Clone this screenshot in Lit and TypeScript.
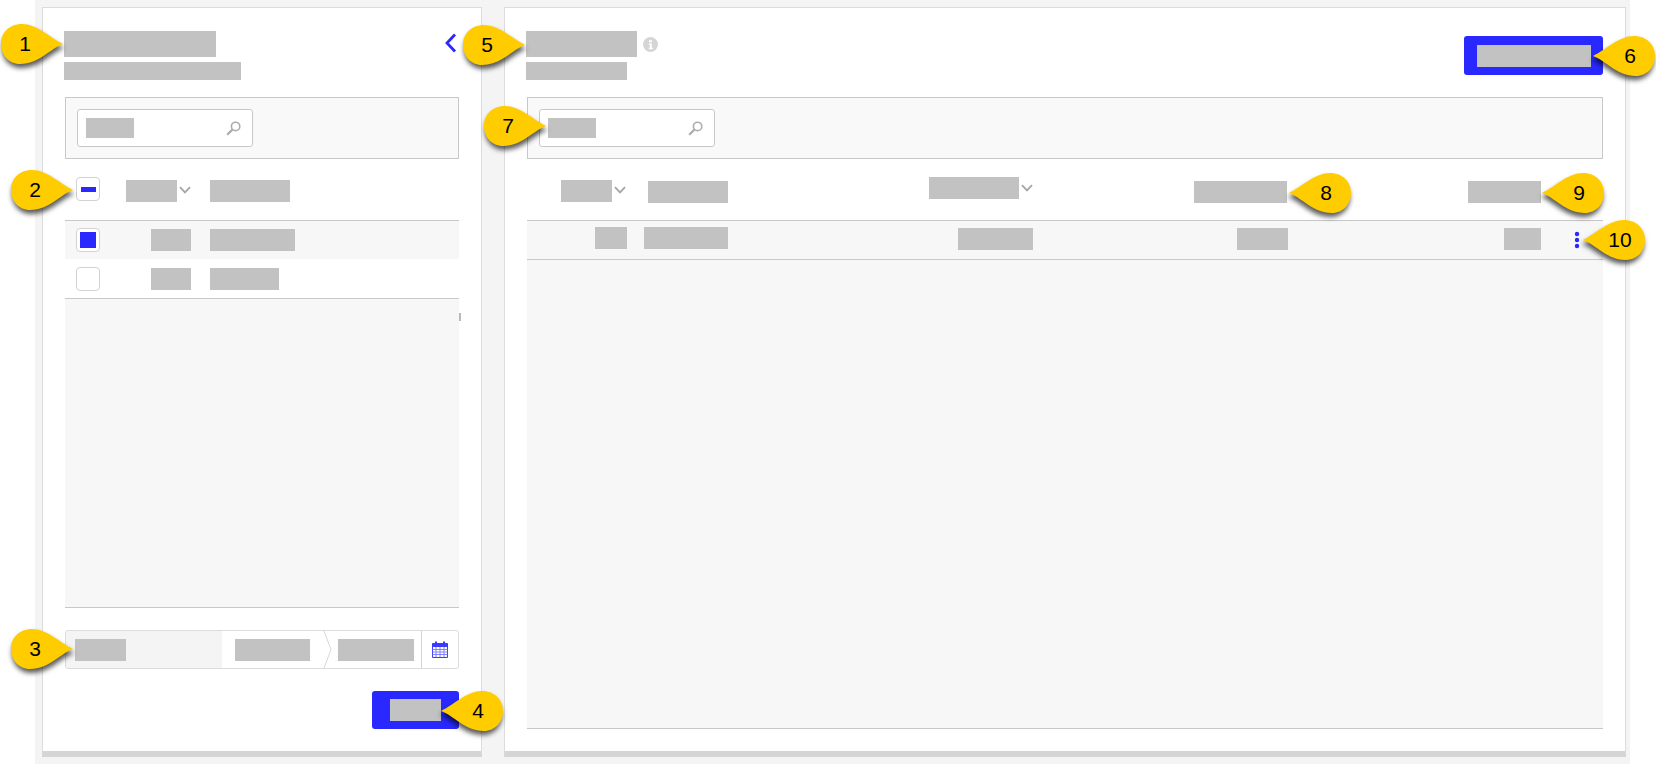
import { LitElement, html, css, svg } from "lit";
import { customElement } from "lit/decorators.js";

type Cell = { w: number; dy?: number; chev?: boolean; mr?: number };

const CALLOUTS: { n: string; x: number; y: number; left?: boolean }[] = [
  { n: "1", x: 1, y: 24 },
  { n: "2", x: 11, y: 170 },
  { n: "3", x: 11, y: 629 },
  { n: "4", x: 441, y: 691, left: true },
  { n: "5", x: 463, y: 25 },
  { n: "6", x: 1593, y: 36, left: true },
  { n: "7", x: 484, y: 106 },
  { n: "8", x: 1289, y: 173, left: true },
  { n: "9", x: 1542, y: 173, left: true },
  { n: "10", x: 1583, y: 220, left: true },
];

const RIGHT_HEAD: Cell[] = [
  { w: 51, chev: true, mr: 1 },
  { w: 80, dy: 1 },
  { w: 90, dy: -3, chev: true },
  { w: 93, dy: 1, mr: 1 },
  { w: 73, dy: 1 },
];
const RIGHT_ROW: Cell[] = [
  { w: 32, dy: -4 },
  { w: 84, dy: -4 },
  { w: 75, dy: -3 },
  { w: 51, dy: -3 },
  { w: 37, dy: -3 },
];

const chevron = svg`<svg class="chev" width="12" height="8" viewBox="0 0 12 8"><path d="M1 1.2 6 6.4 11 1.2" fill="none" stroke="#a6a6a6" stroke-width="1.8"/></svg>`;
const search = svg`<svg class="search" width="15" height="15" viewBox="0 0 15 15"><circle cx="9.6" cy="5.4" r="4.2" fill="none" stroke="#adadad" stroke-width="1.6"/><path d="M6.4 8.6 1.2 13.8" stroke="#adadad" stroke-width="2.2"/></svg>`;

@customElement("app-root")
export class AppRoot extends LitElement {
  static styles = css`
    :host { display: block; position: relative; width: 1656px; height: 764px; background: #fff; overflow: hidden; font-family: "Liberation Sans", Arial, sans-serif; }
    .page { box-sizing: border-box; margin-left: 35px; width: 1595px; height: 764px; background: #f4f4f4; padding: 7px 4px 0 7px; display: flex; gap: 22px; align-items: flex-start; }
    .panel { box-sizing: border-box; height: 750px; background: #fff; border: 1px solid #dcdcdc; border-bottom: 6px solid #d5d5d5; padding: 23px 22px 22px; display: flex; flex-direction: column; }
    .left { width: 440px; }
    .right { width: 1122px; }
    .r { background: #c2c2c2; height: 22px; flex: none; }
    .head { height: 49px; margin: 0 0 17px -1px; display: flex; justify-content: space-between; align-items: flex-start; flex: none; }
    .title-row { display: flex; align-items: center; gap: 6px; }
    .title { height: 26px; }
    .sub { height: 18px; margin-top: 5px; }
    .back { margin: 2px 2px 0 0; display: block; }
    .info { display: block; margin-top: 0; }
    .btn { box-sizing: border-box; background: #2828ff; border-radius: 3px; display: flex; align-items: center; justify-content: center; flex: none; }
    .btn-top { width: 139px; height: 39px; margin: 5px 0 0; }
    .btn-bottom { width: 87px; height: 38px; align-self: flex-end; margin-top: 22px; }
    .toolbar { box-sizing: border-box; height: 62px; flex: none; background: #f9f9f9; border: 1px solid #c8c8c8; padding: 11px; }
    .input { box-sizing: border-box; width: 176px; height: 38px; background: #fff; border: 1px solid #c8c8c8; border-radius: 3px; display: flex; align-items: center; justify-content: space-between; padding: 0 11px 0 8px; }
    .ph { height: 20px; }
    .tree { height: 62px; flex: none; display: grid; align-items: start; padding-top: 21px; box-sizing: border-box; border-bottom: 1px solid #c8c8c8; }
    .grid-left { grid-template-columns: 24px 91px 1fr; column-gap: 0; padding-left: 11px; }
    .grid-right { grid-template-columns: 100px 101px 305px 255px 253px 1fr; }
    .row { height: 39px; flex: none; display: grid; align-items: center; box-sizing: border-box; }
    .row.grid-left { padding-left: 11px; }
    .row.first { height: 38px; }
    .row.last { height: 40px; }
    .row.shade { background: #f7f7f7; }
    .row.end { border-bottom: 1px solid #c8c8c8; }
    .cell { display: flex; justify-content: flex-end; align-items: center; }
    .name { padding-left: 19px; display: flex; }
    .chev { margin: 0 0 3px 2px; flex: none; display: block; }
    .cb { box-sizing: border-box; width: 24px; height: 24px; background: #fff; border: 1px solid #d2d2d2; border-radius: 4px; display: flex; align-items: center; justify-content: center; }
    .cb.up { margin-top: -3px; }
    .minus { width: 15px; height: 5px; background: #2828ff; }
    .fill { width: 16px; height: 16px; background: #2828ff; }
    .area { flex: 1; min-height: 0; position: relative; background: #f7f7f7; border-bottom: 1px solid #c8c8c8; }
    .scroll { position: absolute; left: 100%; top: 14px; width: 2px; height: 8px; background: #b9b9b9; }
    .date { box-sizing: border-box; height: 39px; flex: none; margin-top: 22px; border: 1px solid #dcdcdc; border-radius: 3px; display: flex; align-items: center; overflow: hidden; }
    .d-label { box-sizing: border-box; width: 156px; height: 100%; background: #f4f4f4; padding-left: 9px; display: flex; align-items: center; }
    .d-from { box-sizing: border-box; width: 101px; padding-left: 13px; }
    .sep { display: block; flex: none; height: 37px; }
    .d-to { box-sizing: border-box; width: 89px; padding-left: 6px; }
    .d-cal { flex: 1; height: 100%; border-left: 1px solid #d2d2d2; display: flex; align-items: center; justify-content: center; }
    .dots { display: block; margin-left: 33px; }
    .callout { position: absolute; width: 64px; height: 42px; }
    .callout svg { display: block; overflow: visible; filter: drop-shadow(1px 4px 2.5px rgba(0,0,0,.65)); }
    .callout.flip svg { transform: scaleX(-1); }
    .num { position: absolute; top: 0; height: 40px; width: 48px; left: 0; display: flex; align-items: center; justify-content: center; font-size: 21px; color: #000; }
    .callout.flip .num { left: auto; right: 3px; }
  `;

  private r(w: number, cls = "", dy = 0, mr = 0) {
    return html`<div class="r ${cls}" style="width:${w}px;margin-top:${dy}px;margin-right:${mr}px"></div>`;
  }

  private cellRect(c: Cell) {
    return html`<div class="cell">${this.r(c.w, "", c.dy ?? 0)}${c.chev ? chevron : ""}${c.mr ? html`<span style="width:${c.mr}px"></span>` : ""}</div>`;
  }

  private heading(tw: number, sw: number, extra: unknown, end: unknown) {
    return html`<div class="head">
      <div>
        <div class="title-row">${this.r(tw, "title")}${extra}</div>
        ${this.r(sw, "sub", 5)}
      </div>
      ${end}
    </div>`;
  }

  private toolbar() {
    return html`<div class="toolbar"><div class="input">${this.r(48, "ph", -1)}${search}</div></div>`;
  }

  private leftPanel() {
    return html`<section class="panel left">
      ${this.heading(152, 177, "", html`<svg class="back" width="12" height="20" viewBox="0 0 12 20"><path d="M10 1.5 2 10l8 8.5" fill="none" stroke="#2828ff" stroke-width="2.8"/></svg>`)}
      ${this.toolbar()}
      <div class="tree grid-left">
        <div class="cb up"><div class="minus"></div></div>
        <div class="cell">${this.r(51)}${chevron}</div>
        <div class="name">${this.r(80)}</div>
      </div>
      <div class="row first grid-left shade">
        <div class="cb"><div class="fill"></div></div>
        <div class="cell">${this.r(40)}</div>
        <div class="name">${this.r(85)}</div>
      </div>
      <div class="row last grid-left end">
        <div class="cb"></div>
        <div class="cell">${this.r(40)}</div>
        <div class="name">${this.r(69)}</div>
      </div>
      <div class="area"><div class="scroll"></div></div>
      <div class="date">
        <div class="d-label">${this.r(51)}</div>
        <div class="d-from">${this.r(75)}</div>
        <svg class="sep" width="9" height="37" viewBox="0 0 9 37"><path d="M1 0 8 18.5 1 37" fill="none" stroke="#d8d8d8"/></svg>
        <div class="d-to">${this.r(76)}</div>
        <div class="d-cal">
          <svg width="16" height="17" viewBox="0 0 16 17">
            <path d="M.5 3.5h15v13H.5z" fill="#fff" stroke="#3b3bff"/>
            <path d="M.5 2.5h15v3H.5z" fill="#3b3bff" stroke="#3b3bff"/>
            <path d="M4 .5v3M12 .5v3" stroke="#3b3bff" stroke-width="2"/>
            <path d="M.5 8.5h15M.5 11h15M.5 13.5h15M4 6v10M8 6v10M12 6v10" stroke="#8080ff"/>
          </svg>
        </div>
      </div>
      <div class="btn btn-bottom">${this.r(51)}</div>
    </section>`;
  }

  private rightPanel() {
    return html`<section class="panel right">
      ${this.heading(111, 101,
        html`<svg class="info" width="15" height="15" viewBox="0 0 15 15"><circle cx="7.5" cy="7.5" r="7.5" fill="#d5d5d5"/><path d="M6 3.2h3v2H6zM5.8 6.4h3v4.4h1v1.4H5.8v-1.4h1V7.8h-1z" fill="#fff"/></svg>`,
        html`<div class="btn btn-top">${this.r(114)}</div>`)}
      ${this.toolbar()}
      <div class="tree grid-right">${RIGHT_HEAD.map((c) => this.cellRect(c))}</div>
      <div class="row grid-right shade end">
        ${RIGHT_ROW.map((c) => this.cellRect(c))}
        <svg class="dots" width="6" height="18" viewBox="0 0 6 18"><circle cx="3" cy="3" r="2.2" fill="#2828ff"/><circle cx="3" cy="9" r="2.2" fill="#2828ff"/><circle cx="3" cy="15" r="2.2" fill="#2828ff"/></svg>
      </div>
      <div class="area"></div>
    </section>`;
  }

  render() {
    return html`
      <div class="page">${this.leftPanel()}${this.rightPanel()}</div>
      ${CALLOUTS.map((c) => html`
        <div class="callout ${c.left ? "flip" : ""}" style="left:${c.x}px;top:${c.y}px">
          <svg width="62" height="40" viewBox="0 0 62 40"><path d="M62 20C50 24 38 40 19 40C8 40 0 31 0 20C0 9 8 0 21 0C36 0 48 13 62 20Z" fill="#ffcc00"/></svg>
          <span class="num">${c.n}</span>
        </div>`)}
    `;
  }
}
